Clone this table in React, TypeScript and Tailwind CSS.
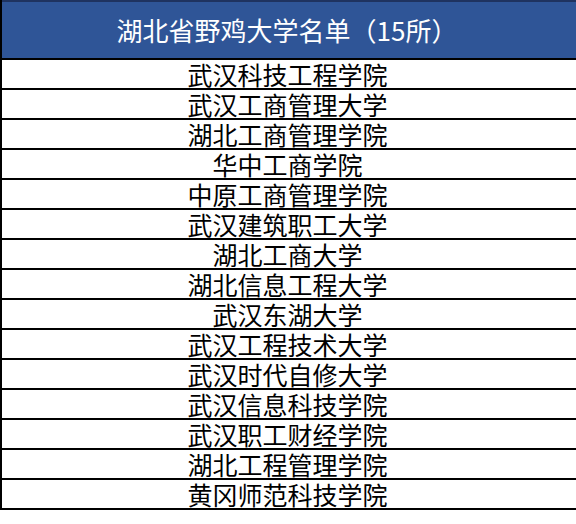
export default function App() {
  const rows = [
    "武汉科技工程学院",
    "武汉工商管理大学",
    "湖北工商管理学院",
    "华中工商学院",
    "中原工商管理学院",
    "武汉建筑职工大学",
    "湖北工商大学",
    "湖北信息工程大学",
    "武汉东湖大学",
    "武汉工程技术大学",
    "武汉时代自修大学",
    "武汉信息科技学院",
    "武汉职工财经学院",
    "湖北工程管理学院",
    "黄冈师范科技学院",
  ];
  return (
    <div
      className="w-[576px] h-[524px] bg-white"
      style={{ fontFamily: '"Noto Sans CJK SC", "Noto Sans", sans-serif' }}
    >
      <div className="border-l-2 border-black">
        <div className="h-[60px] bg-[#2f5597] border-t-2 border-[#1f3360] border-b-2 border-b-black flex items-center justify-center text-white text-[26px] leading-none pr-[4px]">
          湖北省野鸡大学名单（15所）
        </div>
        {rows.map((r) => (
          <div
            key={r}
            className="h-[30px] border-b-2 border-black flex items-center justify-center text-black text-[25px] leading-[28px] pr-[3px]"
          >
            <span className="leading-[24px]">{r}</span>
          </div>
        ))}
      </div>
    </div>
  );
}
